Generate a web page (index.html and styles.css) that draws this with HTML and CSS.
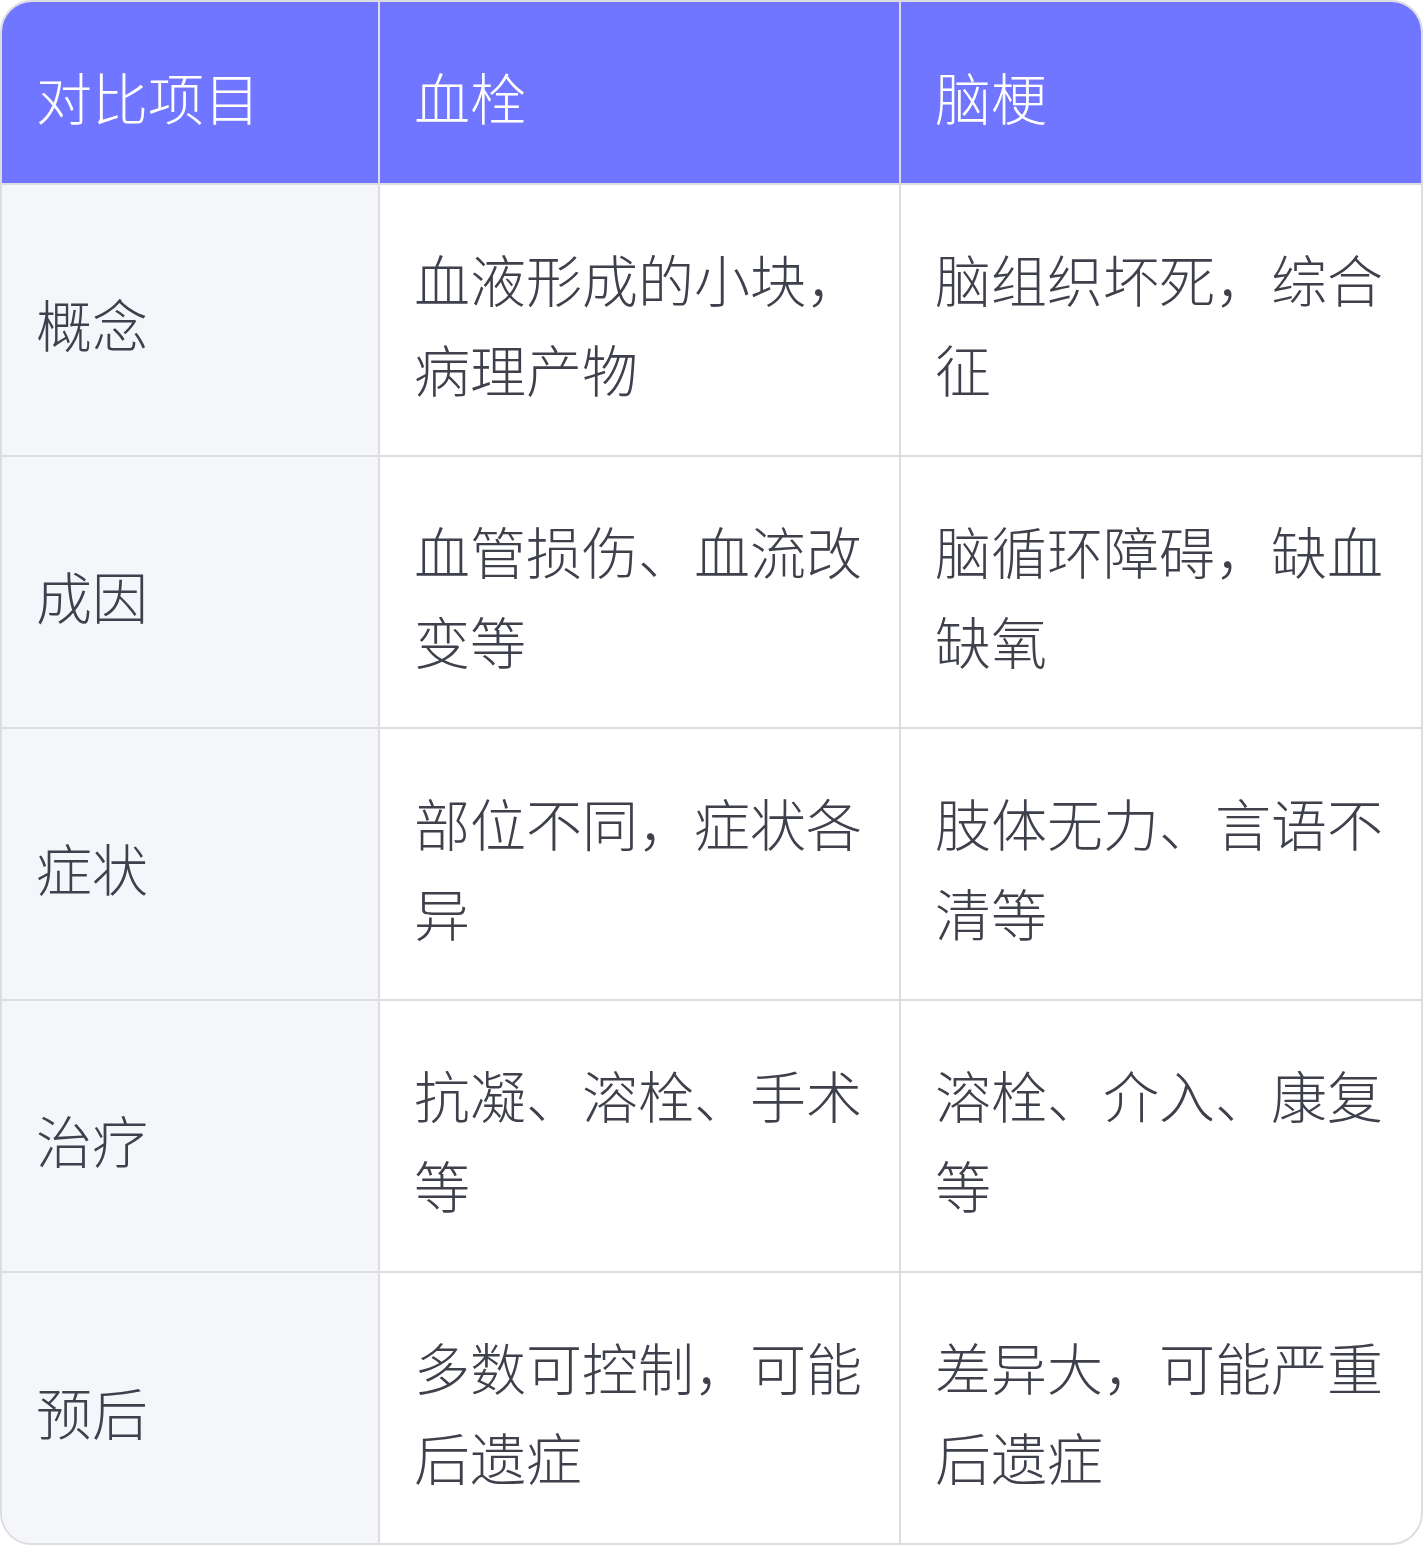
FILE: index.html
```html
<!DOCTYPE html>
<html lang="zh-CN">
<head>
<meta charset="utf-8">
<title>血栓与脑梗对比</title>
<link rel="stylesheet" href="styles.css">
</head>
<body>
<div class="card">
  <table class="compare">
    <colgroup>
      <col class="c1">
      <col class="c2">
      <col class="c3">
    </colgroup>
    <thead>
      <tr><th>对比项目</th><th>血栓</th><th>脑梗</th></tr>
    </thead>
    <tbody>
      <tr><td>概念</td><td>血液形成的小块，病理产物</td><td>脑组织坏死，综合征</td></tr>
      <tr><td>成因</td><td>血管损伤、血流改变等</td><td>脑循环障碍，缺血缺氧</td></tr>
      <tr><td>症状</td><td>部位不同，症状各异</td><td>肢体无力、言语不清等</td></tr>
      <tr><td>治疗</td><td>抗凝、溶栓、手术等</td><td>溶栓、介入、康复等</td></tr>
      <tr><td>预后</td><td>多数可控制，可能后遗症</td><td>差异大，可能严重后遗症</td></tr>
    </tbody>
  </table>
</div>
</body>
</html>
```
FILE: styles.css
```css
html, body {
  margin: 0;
  padding: 0;
  background: #ffffff;
}
.card {
  width: 1419px;
  border: 2px solid #dcdde3;
  border-radius: 32px;
  overflow: hidden;
  background: #ffffff;
}
.compare {
  width: 1419px;
  table-layout: fixed;
  border-collapse: separate;
  border-spacing: 0;
  font-family: "Noto Sans CJK SC", "Noto Sans", sans-serif;
  font-size: 56px;
  font-weight: 300;
  line-height: 90px;
  color: #3e404c;
}
.c1 { width: 378px; }
.c2 { width: 521px; }
.c3 { width: 520px; }
.compare th,
.compare td {
  text-align: left;
  vertical-align: middle;
  padding: 48px 35px 42px 34px;
  border-right: 2px solid #dcdde3;
  border-bottom: 2px solid #dcdde3;
}
.compare th:last-child,
.compare td:last-child {
  border-right: none;
}
.compare tbody tr:last-child td {
  border-bottom: none;
}
.compare th {
  background: #7076ff;
  color: #ffffff;
  font-weight: 300;
  padding-top: 49px;
}
.compare td:first-child {
  background: #f5f6fa;
}
```
